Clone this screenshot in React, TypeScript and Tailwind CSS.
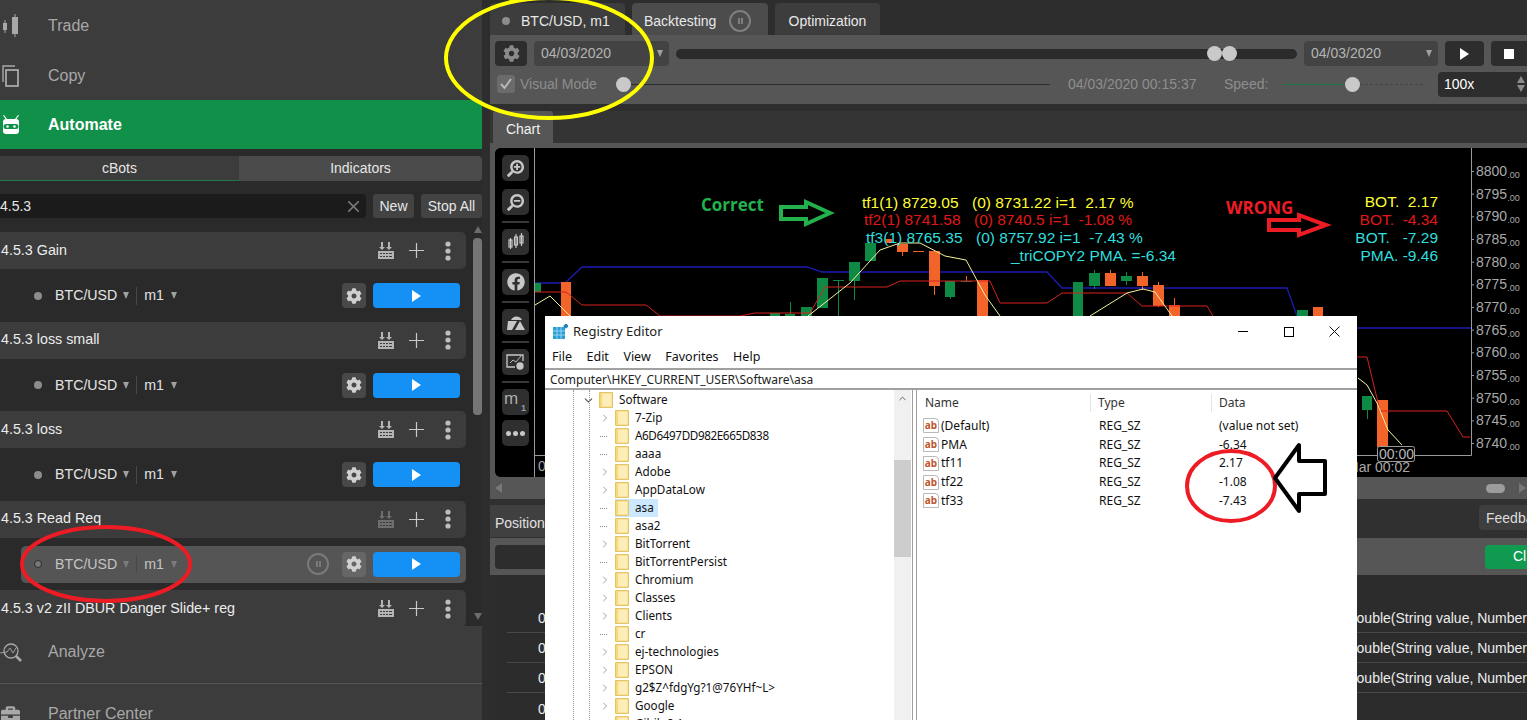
import React from "react";
import { FaCog, FaSearchPlus, FaSearchMinus, FaFacebook, FaBriefcase } from "react-icons/fa";
import { ChevronRight, ChevronDown, ChevronUp } from "lucide-react";

const Gear = ({ dim }: { dim?: boolean }) => (
  <FaCog className={dim ? "text-[#8a8a8a] w-[17px] h-[17px]" : "text-[#d0d0d0] w-[16px] h-[16px]"} />
);

const Stack = ({ dim }: { dim?: boolean }) => (
  <svg width="16" height="17" viewBox="0 0 16 17" fill={dim ? "#6e6e6e" : "#b4b4b4"}>
    <path d="M3 0h2v5h2L4 8 1 5h2zM10 0h2v5h2l-3 3-3-3h2z" />
    <path fillRule="evenodd" d="M0 9h16v8H0zM2 11v1h2v-1zm3 0v1h2v-1zm3 0v1h2v-1zm3 0v1h3v-1zM2 14v1h2v-1zm3 0v1h2v-1zm3 0v1h2v-1zm3 0v1h3v-1z" />
  </svg>
);

const Header = ({ name, dim }: { name: string; dim?: boolean }) => (
  <div className="h-[37px] w-[466px] bg-[#3c3c3c] rounded-r-[5px] flex items-center pl-px text-[14.3px] text-[#ececec] shrink-0">
    <span>{name}</span>
    <div className="ml-auto flex items-center pr-[3px]">
      <div className="w-[31px] flex justify-center"><Stack dim={dim} /></div>
      <div className="w-[31px] flex justify-center">
        <svg width="15" height="15" viewBox="0 0 15 15" stroke="#c8c8c8" strokeWidth="1.2"><path d="M7.5 0v15M0 7.5h15" /></svg>
      </div>
      <div className="w-[31px] flex justify-center">
        <svg width="6" height="20" viewBox="0 0 6 20" fill="#bdbdbd"><circle cx="3" cy="3" r="2.6" /><circle cx="3" cy="10" r="2.6" /><circle cx="3" cy="17" r="2.6" /></svg>
      </div>
    </div>
  </div>
);

const Caret = ({ dim }: { dim?: boolean }) => (
  <span className={dim ? "w-0 h-0 border-x-[3.5px] border-x-transparent border-t-[7px] border-t-[#7c7c7c]" : "w-0 h-0 border-x-[3.5px] border-x-transparent border-t-[7px] border-t-[#a0a0a0]"} />
);

const Instance = ({ sel }: { sel?: boolean }) => (
  <div className="h-[52.5px] pt-[8px] pb-[7px] shrink-0 w-[466px]">
    <div className={sel ? "h-[37.5px] ml-[21px] pl-[13px] pr-[6px] flex items-center bg-[#555555] rounded-[5px] text-[14.2px] text-[#c4c4c4]" : "h-[37.5px] ml-[21px] pl-[13px] pr-[6px] flex items-center rounded-[5px] text-[14.2px] text-[#e4e4e4]"}>
      <span className={sel ? "w-[8px] h-[8px] rounded-full bg-[#777777] border border-[#2c2c2c]" : "w-[8px] h-[8px] rounded-full bg-[#8c8c8c]"} />
      <span className="ml-[13px]">BTC/USD</span>
      <span className="ml-[6px] flex"><Caret dim={sel} /></span>
      <span className="ml-[7px] w-px h-[18px] bg-[#484848]" />
      <span className="ml-[7px]">m1</span>
      <span className="ml-[7px] flex"><Caret dim={sel} /></span>
      {sel && (
        <span className="ml-[130px] w-[22px] h-[22px] rounded-full border-2 border-[#7a7a7a] flex items-center justify-center gap-px">
          <span className="w-[2px] h-[6px] bg-[#7a7a7a]" /><span className="w-[2px] h-[6px] bg-[#7a7a7a]" />
        </span>
      )}
      <div className={sel ? "ml-auto w-[24px] h-[25px] bg-[#666666] rounded-[4px] flex items-center justify-center" : "ml-auto w-[24px] h-[25px] bg-[#484848] rounded-[4px] flex items-center justify-center"}>
        <Gear />
      </div>
      <div className="ml-[7px] w-[87px] h-[25px] bg-[#1590f5] rounded-[4px] flex items-center justify-center">
        <span className="w-0 h-0 border-y-[6px] border-y-transparent border-l-[9px] border-l-white" />
      </div>
    </div>
  </div>
);

const NavIcon = ({ kind }: { kind: string }) => {
  if (kind === "trade")
    return (
      <svg width="20" height="24" viewBox="0 0 20 24" fill="#a8a8a8">
        <rect x="3" y="9" width="4" height="7" /><rect x="4.500" y="6" width="1" height="13" />
        <rect x="12" y="3" width="6" height="17" /><rect x="14.500" y="0" width="1" height="23" />
      </svg>
    );
  if (kind === "copy")
    return (
      <svg width="20" height="22" viewBox="0 0 20 22" fill="none" stroke="#a8a8a8" strokeWidth="1.400">
        <path d="M3 17V1h12" /><rect x="6" y="5" width="12" height="16" strokeWidth="1.800" />
      </svg>
    );
  if (kind === "bot")
    return (
      <svg width="20" height="22" viewBox="0 0 20 22" fill="#ffffff">
        <path d="M4 1l3 4H5.600L3 1.500zM18 1l-3 4h1.400L19 1.500z" />
        <path fillRule="evenodd" d="M6 5h10a3 3 0 0 1 3 3v9a3 3 0 0 1-3 3H6a3 3 0 0 1-3-3V8a3 3 0 0 1 3-3zm0 5a2 2 0 0 0 0 5h10a2 2 0 0 0 0-5z" />
        <circle cx="7.500" cy="12.500" r="1.300" /><circle cx="14.500" cy="12.500" r="1.300" />
      </svg>
    );
  return (
    <svg width="22" height="22" viewBox="0 0 22 22" fill="none" stroke="#a8a8a8" strokeWidth="1.300">
      <circle cx="11" cy="10" r="7" /><path d="M16 15l5 5" strokeWidth="2.600" /><path d="M0 12l7-1 3-4 3 5 3-5" strokeWidth="0.900" />
    </svg>
  );
};

const NavRow = ({ kind, label, h, active }: { kind: string; label: string; h: string; active?: boolean }) => (
  <div className={`${h} flex items-center shrink-0 ${active ? "bg-[#109048] text-white font-bold" : "bg-[#3c3c3c] text-[#a8a8a8]"}`}>
    <div className="w-[48px] flex"><NavIcon kind={kind} /></div>
    <span className="text-[16px]">{label}</span>
  </div>
);

const Sidebar = () => (
  <div className="w-[482px] h-[720px] flex flex-col bg-[#2a2a2a] shrink-0 overflow-hidden">
    <NavRow kind="trade" label="Trade" h="h-[50px] pt-[2px]" />
    <NavRow kind="copy" label="Copy" h="h-[50px] pt-[2px]" />
    <NavRow kind="bot" label="Automate" h="h-[49px]" active />
    <div className="mt-[7px] h-[25px] flex text-[14px] text-[#e6e6e6] shrink-0">
      <div className="w-[239px] bg-[#3c3c3c] border-b border-[#1f7a45] flex items-center justify-center">cBots</div>
      <div className="flex-1 bg-[#4b4b4b] rounded-r-[4px] flex items-center justify-center">Indicators</div>
    </div>
    <div className="mt-[13px] h-[24px] flex shrink-0 text-[14px] text-[#e6e6e6]">
      <div className="w-[366px] bg-[#1b1b1b] rounded-r-[4px] flex items-center">
        <span className="leading-none -mt-px">4.5.3</span>
        <svg className="ml-auto mr-[7px]" width="11" height="11" viewBox="0 0 11 11" stroke="#777777" strokeWidth="1.600"><path d="M0 0l11 11M11 0L0 11" /></svg>
      </div>
      <div className="ml-[7px] w-[41px] bg-[#434343] rounded-[3px] flex items-center justify-center">New</div>
      <div className="ml-[7px] w-[61px] bg-[#434343] rounded-[3px] flex items-center justify-center">Stop All</div>
    </div>
    <div className="h-[408px] flex shrink-0 overflow-hidden">
      <div className="w-[473px] pt-[14px] flex flex-col">
        <Header name="4.5.3 Gain" />
        <Instance />
        <Header name="4.5.3 loss small" />
        <Instance />
        <Header name="4.5.3 loss" />
        <Instance />
        <Header name="4.5.3 Read Req" dim />
        <Instance sel />
        <Header name="4.5.3 v2 zII DBUR Danger Slide+ reg" />
      </div>
      <div className="w-[9px] flex flex-col items-center pt-[8px] pb-[6px]">
        <span className="w-0 h-0 border-x-[4px] border-x-transparent border-b-[7px] border-b-[#6c6c6c]" />
        <span className="mt-[5px] w-[9px] h-[177px] rounded-[4px] bg-[#757575]" />
        <span className="mt-auto w-0 h-0 border-x-[4px] border-x-transparent border-t-[7px] border-t-[#6c6c6c]" />
      </div>
    </div>
    <NavRow kind="an" label="Analyze" h="h-[57px] pb-[6px]" />
    <div className="h-px bg-[#555555] shrink-0" />
    <div className="h-[37px] bg-[#3c3c3c] flex items-center text-[16px] text-[#a8a8a8] shrink-0 pt-[23px]">
      <div className="w-[48px] pl-[1px] flex"><FaBriefcase className="w-[19px] h-[19px]" /></div>
      <span>Partner Center</span>
    </div>
  </div>
);

const Thumb = () => <span className="w-[15px] h-[15px] rounded-full bg-[#c9c9c9] shrink-0" />;

const DateBox = ({ w }: { w: string }) => (
  <div className={`${w} h-[25px] bg-[#434343] rounded-[4px] flex items-center pl-[7px] pr-[6px] text-[14px] text-[#b4b4b4] shrink-0`}>
    04/03/2020
    <span className="ml-auto flex"><Caret /></span>
  </div>
);

const Toolbar = () => (
  <div className="h-[69px] bg-[#565656] pl-[5px] pt-[6px] shrink-0">
    <div className="flex items-center h-[25px]">
      <div className="w-[32px] h-[25px] bg-[#2d2d2d] rounded-[4px] flex items-center justify-center shrink-0"><Gear dim /></div>
      <div className="ml-[7px] shrink-0"><DateBox w="w-[135px]" /></div>
      <div className="ml-[7px] w-[621px] h-[10px] rounded-full bg-[#2b2b2b] flex items-center justify-end pr-[60px] shrink-0">
        <Thumb /><Thumb />
      </div>
      <div className="ml-[7px] shrink-0"><DateBox w="w-[134px]" /></div>
      <div className="ml-[7px] w-[39px] h-[25px] bg-[#2d2d2d] rounded-[4px] flex items-center justify-center shrink-0">
        <span className="w-0 h-0 border-y-[6px] border-y-transparent border-l-[9px] border-l-white" />
      </div>
      <div className="ml-[7px] w-[36px] h-[25px] bg-[#2d2d2d] rounded-l-[4px] flex items-center justify-center shrink-0">
        <span className="w-[10px] h-[10px] bg-white" />
      </div>
    </div>
    <div className="flex items-center h-[24px] mt-[6px] text-[14px] text-[#8e8e8e]">
      <div className="ml-[2px] w-[18px] h-[18px] bg-[#6b6b6b] rounded-[3px] flex items-center justify-center shrink-0">
        <svg width="12" height="12" viewBox="0 0 12 12" fill="none" stroke="#b9b9b9" strokeWidth="2"><path d="M1 6l3.500 4L11 1" /></svg>
      </div>
      <span className="ml-[5px] w-[96px] shrink-0">Visual Mode</span>
      <Thumb />
      <span className="w-[419px] h-px bg-[#2d2d2d] shrink-0" />
      <span className="ml-[18px] w-[156px] shrink-0">04/03/2020 00:15:37</span>
      <span className="w-[59px] shrink-0">Speed:</span>
      <span className="w-[62px] h-px bg-[#1f7a45] shrink-0" />
      <Thumb />
      <span className="w-[63px] border-t border-dashed border-[#444444] shrink-0" />
      <div className="ml-[15px] flex-1 h-[25px] bg-[#2d2d2d] rounded-l-[4px] flex items-center pl-[6px] text-white">
        100x
        <span className="ml-auto mr-[2px] flex flex-col gap-[2px]">
          <span className="w-0 h-0 border-x-[4px] border-x-transparent border-b-[7px] border-b-[#8c8c8c]" />
          <span className="w-0 h-0 border-x-[4px] border-x-transparent border-t-[7px] border-t-[#8c8c8c]" />
        </span>
      </div>
    </div>
  </div>
);

const ToolBtn = ({ children, mt }: { children: React.ReactNode; mt: string }) => (
  <div className={`${mt} w-[27px] h-[26px] bg-[#2f2f2f] rounded-[5px] flex items-center justify-center text-[#c8c8c8] shrink-0`}>{children}</div>
);
const ToolSep = () => <div className="mt-[6px] w-[27px] h-[2px] bg-[#383838] shrink-0" />;

const Tools = () => (
  <div className="w-[40px] h-full pl-[7px] pt-[7px] flex flex-col bg-black border-r border-[#9a9a9a] shrink-0">
    <ToolBtn mt="mt-0"><FaSearchPlus className="w-[17px] h-[17px] -scale-x-100" /></ToolBtn>
    <ToolBtn mt="mt-[8px]"><FaSearchMinus className="w-[17px] h-[17px] -scale-x-100" /></ToolBtn>
    <ToolSep />
    <ToolBtn mt="mt-[6px]">
      <svg width="16" height="18" viewBox="0 0 16 18" fill="none" stroke="#c8c8c8" strokeWidth="1.200">
        <rect x="1" y="7" width="3" height="7" /><path d="M2.500 5v11" />
        <rect x="6.500" y="4" width="3" height="8" /><path d="M8 1v14" />
        <rect x="12" y="3" width="3" height="7" /><path d="M13.500 0v13" />
      </svg>
    </ToolBtn>
    <ToolSep />
    <ToolBtn mt="mt-[6px]"><FaFacebook className="w-[18px] h-[18px]" /></ToolBtn>
    <ToolSep />
    <ToolBtn mt="mt-[6px]">
      <svg width="20" height="20" viewBox="0 0 20 20" fill="#c8c8c8">
        <path d="M5 8a6 6 0 0 1 11 0z" /><path d="M2 9h9l-5 9H1z" /><path d="M14 9l5 9H9z" />
      </svg>
    </ToolBtn>
    <ToolSep />
    <ToolBtn mt="mt-[6px]">
      <svg width="20" height="18" viewBox="0 0 20 18" fill="none" stroke="#c8c8c8" strokeWidth="1.300">
        <path d="M9 14H1V2h16v6" /><path d="M4 10l3-3 3 2 5-6" strokeWidth="0.900" />
        <circle cx="14" cy="13" r="3" fill="#c8c8c8" />
      </svg>
    </ToolBtn>
    <ToolSep />
    <ToolBtn mt="mt-[6px]">
      <div className="relative w-full h-full leading-none text-[#aaaaaa]">
        <span className="absolute left-[2px] top-[1px] text-[17px]">m</span>
        <span className="absolute right-[3px] bottom-[2px] text-[9px] font-bold text-[#8aa0b0]">1</span>
      </div>
    </ToolBtn>
    <ToolBtn mt="mt-[5px]">
      <svg width="19" height="5" viewBox="0 0 19 5" fill="#c8c8c8"><circle cx="2.500" cy="2.500" r="2.500" /><circle cx="9.500" cy="2.500" r="2.500" /><circle cx="16.500" cy="2.500" r="2.500" /></svg>
    </ToolBtn>
  </div>
);

const G = "#0f8a45";
const O = "#f2642a";
const candles: [number, number, number, number, string][] = [
  [535, 541, 283, 292, G], [561, 571, 282, 320, O], [817, 828, 278, 308, G], [849, 860, 262, 281, G],
  [865, 876, 243, 261, G], [885, 892, 239, 243, O], [897, 908, 244, 252, O], [929, 940, 251, 286, O],
  [945, 955, 281, 297, G], [977, 988, 280, 320, O], [770, 780, 313, 320, G], [785, 795, 314, 320, G],
  [801, 812, 307, 320, G], [1073, 1083, 282, 320, G], [1089, 1100, 273, 286, G], [1105, 1116, 273, 286, O],
  [1121, 1132, 276, 281, G], [1137, 1148, 276, 286, O], [1153, 1164, 285, 306, O], [1169, 1180, 305, 320, O],
  [1297, 1308, 310, 320, G], [1313, 1323, 307, 320, O], [1362, 1372, 396, 410, G], [1377, 1388, 400, 447, O],
];
const wicks: [number, number, number, string][] = [
  [790, 302, 316, G], [838, 280, 320, G], [854, 281, 300, G], [902, 252, 256, O], [934, 286, 295, O], [1094, 270, 289, G],
  [1110, 270, 273, O], [1126, 272, 285, G], [1142, 272, 290, O], [1158, 282, 307, O], [1174, 298, 305, O], [950, 297, 299, G], [1367, 410, 419, G],
  [966, 276, 282, O],
];
const axis = ["8800", "8795", "8790", "8785", "8780", "8775", "8770", "8765", "8760", "8755", "8750", "8745", "8740"];

const ChartSvg = () => (
  <svg width="992" height="329" viewBox="535 148 992 329" className="block shrink-0">
    <rect x="535" y="148" width="992" height="329" fill="#000000" />
    <polyline fill="none" stroke="#1b1bb0" strokeWidth="1.300" points="535,283 565,283 582,267 807,267 822,272 1047,272 1062,288 1287,288 1297,316" />
    <polyline fill="none" stroke="#1b1bb0" strokeWidth="1.300" points="1357,328 1471,328" />
    {candles.map(([a, b, c, d, col], i) => <rect key={i} x={a} y={c} width={b - a} height={d - c} fill={col} />)}
    {wicks.map(([x, a, b, col], i) => <rect key={i} x={x} y={a} width="1" height={b - a} fill={col} />)}
    <rect x="833" y="280" width="11" height="1" fill={G} />
    <rect x="913" y="251" width="11" height="1" fill={O} />
    <rect x="961" y="281" width="11" height="1" fill={G} />
    <polyline fill="none" stroke="#d92020" strokeWidth="1" points="535,292 566,292 582,305 646,305 660,316 740,316 755,313 810,313 825,287 887,287 900,281 990,281 1000,303 1047,303 1062,293 1127,293 1142,306 1207,306 1213,316" />
    <polyline fill="none" stroke="#d92020" strokeWidth="1" points="1357,357 1367,357 1380,411 1447,411 1463,437 1470,437" />
    <polyline fill="none" stroke="#f5f29a" strokeWidth="1" points="535,305 550,296 572,318" />
    <polyline fill="none" stroke="#f5f29a" strokeWidth="1" points="808,316 850,283 880,250 900,243 920,243 945,256 966,260 985,295 1000,316" />
    <polyline fill="none" stroke="#f5f29a" strokeWidth="1" points="1090,316 1127,293 1143,289 1155,292 1172,316" />
    <polyline fill="none" stroke="#f5f29a" strokeWidth="1" points="1358,378 1367,385 1377,403 1388,430 1402,445" />
    <path d="M1471.500 148V455.500H535" fill="none" stroke="#9a9a9a" strokeWidth="1" />
    {axis.map((a, i) => {
      const y = 171 + i * 22.67;
      return (
        <g key={a}>
          <rect x="1471" y={y} width="3" height="1" fill="#9a9a9a" />
          <text x="1476" y={y + 5} fontSize="14" fill="#a9a9a9" fontFamily="'Liberation Sans', sans-serif">{a}<tspan fontSize="9" dy="2">.00</tspan></text>
        </g>
      );
    })}
    <text x="1347" y="472" fontSize="14" fill="#a9a9a9" fontFamily="'Liberation Sans', sans-serif">Mar 00:02</text>
    <text x="538" y="471" fontSize="14" fill="#a9a9a9" fontFamily="'Liberation Sans', sans-serif">0</text>
    <rect x="1377.500" y="446.500" width="37" height="15" rx="2" fill="#000000" stroke="#9a9a9a" />
    <text x="1379" y="459" fontSize="14" fill="#b8b8b8" fontFamily="'Liberation Sans', sans-serif">00:00</text>
  </svg>
);

const Main = () => (
  <div className="w-[1037px] h-[720px] flex flex-col bg-[#2d2d2d] shrink-0 overflow-hidden">
    <div className="h-[35px] pt-[3px] flex gap-[7px] text-[14px] text-[#e8e8e8] shrink-0">
      <div className="w-[135px] bg-[#3d3d3d] rounded-t-[4px] flex items-center pl-[12px] pt-[4px]">
        <span className="w-[8px] h-[8px] rounded-full bg-[#8c8c8c]" />
        <span className="ml-[11px]">BTC/USD, m1</span>
      </div>
      <div className="w-[136px] bg-[#4c4c4c] rounded-t-[4px] flex items-center pl-[12px] pt-[4px]">
        Backtesting
        <span className="ml-[13px] w-[22px] h-[22px] rounded-full border-2 border-[#7f7f7f] flex items-center justify-center gap-px">
          <span className="w-[2px] h-[6px] bg-[#7f7f7f]" /><span className="w-[2px] h-[6px] bg-[#7f7f7f]" />
        </span>
      </div>
      <div className="w-[105px] bg-[#3d3d3d] rounded-t-[4px] flex items-center justify-center pt-[4px]">Optimization</div>
    </div>
    <Toolbar />
    <div className="h-[39px] pt-[7px] shrink-0 bg-[#2e2e2e]">
      <div className="h-[32px] bg-[#343434] flex">
        <div className="ml-[3px] w-[60px] bg-[#565656] rounded-t-[3px] flex items-center justify-center pt-[4px] text-[14px] text-[#f0f0f0]">Chart</div>
      </div>
    </div>
    <div className="h-[5px] bg-[#565656] shrink-0" />
    <div className="h-[329px] flex bg-[#565656] pl-[5px] shrink-0">
      <div className="flex overflow-hidden rounded-l-[6px] bg-black h-full">
        <Tools />
        <ChartSvg />
      </div>
    </div>
    <div className="h-[22px] bg-[#565656] flex items-center shrink-0 pl-[5px]">
      <span className="w-0 h-0 border-y-[5px] border-y-transparent border-r-[7px] border-r-[#777777]" />
      <span className="ml-auto mr-[14px] w-[19px] h-[9px] rounded-full bg-[#9c9c9c]" />
      <span className="mr-[1px] w-0 h-0 border-y-[5px] border-y-transparent border-l-[7px] border-l-[#777777]" />
    </div>
    <div className="h-[39px] pt-[6px] bg-[#303030] flex shrink-0 text-[14px]">
      <div className="w-[200px] h-[32px] bg-[#404040] flex items-center pl-[5px] pt-[5px] text-[#e0e0e0]">Positions</div>
      <div className="ml-auto w-[48px] h-[25px] bg-[#3e3e3e] rounded-l-[4px] flex items-center pl-[7px] pt-[2px] text-[#dcdcdc] overflow-hidden whitespace-nowrap">Feedback</div>
    </div>
    <div className="h-[37px] bg-[#565656] pl-[5px] flex items-center shrink-0">
      <div className="w-[700px] h-[24px] bg-[#2d2d2d] rounded-[4px]" />
      <div className="ml-auto w-[42px] h-[24px] bg-[#0f9a4f] rounded-l-[4px] flex items-center pl-[28px] text-[14px] text-white overflow-hidden whitespace-nowrap">Cl</div>
    </div>
    <div className="flex-1 ml-[5px] bg-[#2c2c2c] rounded-tl-[6px] pt-[28px] overflow-hidden text-[14px] text-[#ececec]">
      {[1, 2, 3, 4].map((n) => (
        <div key={n} className={n < 4 ? "ml-[12px] h-[30px] pl-[31px] pt-[2px] flex items-center border-b border-[#484848]" : "ml-[12px] h-[30px] pl-[31px] pt-[2px] flex items-center"}>
          <span className="w-[809px]">0</span>
          {n < 4 && <span className="whitespace-nowrap">Double(String value, Number</span>}
        </div>
      ))}
    </div>
  </div>
);

const tree: [string, boolean][] = [
  ["7-Zip", true], ["A6D6497DD982E665D838", false], ["aaaa", false], ["Adobe", true], ["AppDataLow", true], ["asa", false],
  ["asa2", false], ["BitTorrent", true], ["BitTorrentPersist", false], ["Chromium", true], ["Classes", true], ["Clients", true],
  ["cr", false], ["ej-technologies", true], ["EPSON", true], ["g2$Z^fdgYg?1@76YHf~L>", true], ["Google", true], ["Gihib 8.1", true],
];
const values: [string, string][] = [["(Default)", "(value not set)"], ["PMA", "-6.34"], ["tf11", "2.17"], ["tf22", "-1.08"], ["tf33", "-7.43"]];

const Folder = () => (
  <svg width="14" height="16" viewBox="0 0 14 16" className="shrink-0">
    <path d="M0.500 0.500H13.500V15.500H0.500z" fill="#f8d775" stroke="#e2c46a" />
    <path d="M3 1.500H12.500V14.500H3z" fill="#fdeeb8" />
  </svg>
);

const AbIcon = () => (
  <span className="w-[16px] h-[15px] shrink-0 border border-[#b9b9b9] bg-white text-[#c0562f] text-[10px] font-bold leading-[13px] text-center rounded-tr-[4px]">ab</span>
);

const Registry = () => (
  <div className="absolute left-[545px] top-[316px] w-[812px] h-[404px] bg-white flex flex-col overflow-hidden text-[12px] text-[#111111] font-['Noto_Sans','Open_Sans',sans-serif]">
    <div className="h-[30px] pt-[1px] flex items-center shrink-0">
      <svg width="16" height="16" viewBox="0 0 16 16" className="ml-[7px]">
        <rect x="1" y="3" width="12" height="12" fill="#2a9fd6" />
        <path d="M1 7h12M1 11h12M5 3v12M9 3v12" stroke="#a8e0f5" strokeWidth="0.800" />
        <rect x="12" y="0" width="4" height="4" fill="#2a7fb8" transform="rotate(45 14 2)" />
      </svg>
      <span className="ml-[5px] text-[13px] text-[#222222]">Registry Editor</span>
      <div className="ml-auto flex items-center pr-[17px]">
        <span className="w-[10px] h-px bg-black" />
        <span className="ml-[36px] w-[10px] h-[10px] border border-black" />
        <svg className="ml-[35px]" width="11" height="11" viewBox="0 0 11 11" stroke="#111111" strokeWidth="1"><path d="M0.500 0.500l10 10M10.500 0.500l-10 10" /></svg>
      </div>
    </div>
    <div className="h-[22px] pt-[1px] flex items-center pl-[7px] gap-[14.500px] shrink-0 text-[12.500px]">
      <span>File</span><span>Edit</span><span>View</span><span>Favorites</span><span>Help</span>
    </div>
    <div className="h-[22px] pt-[1px] border-y-2 border-[#a0a0a0] flex items-center pl-[5px] shrink-0 text-[#222222]">Computer\HKEY_CURRENT_USER\Software\asa</div>
    <div className="flex-1 flex min-h-0">
      <div className="w-[367px] relative flex overflow-hidden shrink-0 text-[11.700px]">
        <div className="absolute left-[28px] top-0 bottom-0 border-l border-dotted border-[#999999]" />
        <div className="absolute left-[44px] top-0 bottom-0 border-l border-dotted border-[#999999]" />
        <div className="flex-1 pt-px">
          <div className="h-[18px] flex items-center pl-[37px]">
            <ChevronDown className="w-[13px] h-[13px] text-[#555555] bg-white" />
            <span className="ml-[4px] flex"><Folder /></span>
            <span className="ml-[6px]">Software</span>
          </div>
          {tree.map(([name, exp]) => (
            <div key={name} className="h-[18px] flex items-center pl-[54px]">
              <span className="w-[12px] flex">{exp ? <ChevronRight className="w-[12px] h-[12px] text-[#a0a0a0] bg-white" /> : <span className="w-[7px] ml-[1px] border-t border-dotted border-[#888888]" />}</span>
              <div className={name === "asa" ? "ml-[4px] pr-[4px] h-[18px] flex items-center bg-[#cce8ff]" : "ml-[4px] h-[18px] flex items-center"}>
                <Folder />
                <span className={name === "A6D6497DD982E665D838" ? "ml-[6px] whitespace-nowrap tracking-[-0.400px]" : "ml-[6px] whitespace-nowrap"}>{name}</span>
              </div>
            </div>
          ))}
        </div>
        <div className="w-[17px] bg-[#f0f0f0] flex flex-col items-center shrink-0 mr-px z-10">
          <ChevronUp className="w-[11px] h-[11px] mt-[3px] text-[#555555]" />
          <div className="mt-[56px] w-full h-[97px] bg-[#cdcdcd]" />
        </div>
      </div>
      <div className="w-[5px] border-x border-[#a0a0a0] shrink-0" />
      <div className="flex-1 pt-[3px] pl-[6px]">
        <div className="h-[19px] flex items-center text-[#333333]">
          <span className="w-[168px] pl-[2px] border-r border-[#e4e4e4]">Name</span>
          <span className="w-[121px] pl-[7px] border-r border-[#e4e4e4]">Type</span>
          <span className="pl-[7px]">Data</span>
        </div>
        <div className="mt-[4.500px] flex flex-col">
          {values.map(([n, v]) => (
            <div key={n} className="h-[18.750px] flex items-center">
              <AbIcon />
              <span className="ml-[2px] w-[158px]">{n}</span>
              <span className="w-[120px]">REG_SZ</span>
              <span>{v}</span>
            </div>
          ))}
        </div>
      </div>
    </div>
  </div>
);

const Label = ({ x, y, color, children }: { x: string; y: string; color: string; children: React.ReactNode }) => (
  <span className={`absolute whitespace-pre text-[15.500px] leading-[18px] ${x} ${y} ${color}`}>{children}</span>
);

export default function App() {
  return (
    <div className="relative w-[1527px] h-[720px] overflow-hidden flex bg-[#2d2d2d] font-['Liberation_Sans',Arial,sans-serif]">
      <Sidebar />
      <div className="w-[8px] shrink-0 bg-[#2d2d2d]" />
      <Main />
      <Label x="left-[862px]" y="top-[194px]" color="text-[#ffff33]">tf1(1) 8729.05</Label>
      <Label x="left-[972px]" y="top-[194px]" color="text-[#ffff33]">(0) 8731.22 i=1  2.17 %</Label>
      <Label x="left-[864px]" y="top-[211px]" color="text-[#e01818]">tf2(1) 8741.58</Label>
      <Label x="left-[974px]" y="top-[211px]" color="text-[#e01818]">(0) 8740.5 i=1  -1.08 %</Label>
      <Label x="left-[866px]" y="top-[229px]" color="text-[#2fdede]">tf3(1) 8765.35</Label>
      <Label x="left-[976px]" y="top-[229px]" color="text-[#2fdede]">(0) 8757.92 i=1  -7.43 %</Label>
      <Label x="left-[1011px]" y="top-[247px]" color="text-[#2fdede]">_triCOPY2 PMA. =-6.34</Label>
      <Label x="right-[89px]" y="top-[193px]" color="text-[#ffff33]">BOT.  2.17</Label>
      <Label x="right-[89px]" y="top-[211px]" color="text-[#e01818]">BOT.  -4.34</Label>
      <Label x="right-[89px]" y="top-[229px]" color="text-[#2fdede]">BOT.   -7.29</Label>
      <Label x="right-[89px]" y="top-[247px]" color="text-[#2fdede]">PMA. -9.46</Label>
      <span className="absolute left-[701px] top-[193px] text-[17px] leading-[23px] font-bold text-[#22b14c] font-['Open_Sans',sans-serif]">Correct</span>
      <span className="absolute left-[1226px] top-[196px] text-[17px] leading-[23px] font-bold text-[#ed1c24] font-['Open_Sans',sans-serif]">WRONG</span>
      <Registry />
      <svg width="1527" height="720" viewBox="0 0 1527 720" fill="none" className="absolute left-0 top-0 pointer-events-none">
        <ellipse cx="549" cy="58" rx="103" ry="60" stroke="#ffff00" strokeWidth="4" />
        <ellipse cx="106" cy="564" rx="84" ry="37" stroke="#ed1c24" strokeWidth="4" />
        <ellipse cx="1231" cy="486" rx="44" ry="35" stroke="#ed1c24" strokeWidth="4" />
        <path d="M1275 478L1299 445V461H1325V494H1299V511Z" stroke="#000000" strokeWidth="4" strokeLinejoin="round" />
        <path d="M781 207H806V202L830 213L806 224V219H781Z" stroke="#22b14c" strokeWidth="4" />
        <path d="M1269 220H1299V215L1326 225L1299 235V230H1269Z" stroke="#ed1c24" strokeWidth="4" />
      </svg>
    </div>
  );
}
